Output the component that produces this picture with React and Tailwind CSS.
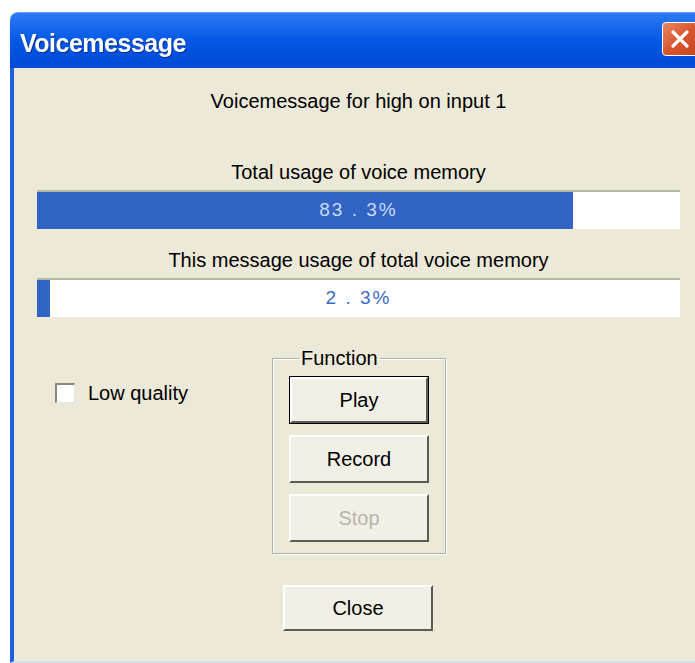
import React, { useState } from 'react';

const font = { fontFamily: '"Liberation Sans", Arial, sans-serif' };

// classic raised push button
function PushButton({ children, isDefault, disabled, className = '' }) {
  return (
    <button
      disabled={disabled}
      className={`relative flex items-center justify-center bg-[#f1efe6] text-[20px] ${isDefault ? 'border border-black' : ''} ${className}`}
    >
      <span className="absolute inset-0 border-t-2 border-l-2 border-t-white border-l-white border-b-2 border-r-2 border-b-[#5c5a52] border-r-[#5c5a52]" />
      <span className={disabled ? 'text-[#b8b5a8]' : 'text-black'}>{children}</span>
    </button>
  );
}

function UsageBar({ percent, label }) {
  return (
    <div className="relative h-[39px] bg-white border-t-2 border-t-[#b9b6aa]">
      <div className="absolute left-0 top-0 bottom-0 bg-[#3164c4]" style={{ width: `${percent}%` }} />
      <div className="absolute inset-0 flex items-center justify-center">
        <span
          className="text-[19px] tracking-[2px] whitespace-pre"
          style={{ color: percent > 50 ? '#c9dbf3' : '#3b6bc4' }}
        >
          {label}
        </span>
      </div>
    </div>
  );
}

export default function App() {
  const [lowQuality, setLowQuality] = useState(false);

  return (
    <div className="w-[695px] h-[663px] bg-white overflow-hidden pl-[10px] pt-[12px]" style={font}>
      <div className="flex flex-col h-full w-[690px]">
        {/* title bar */}
        <div className="h-[56px] rounded-tl-[8px] flex items-start justify-between bg-gradient-to-b from-[#2c7af5] via-[#0458e6] to-[#0149d6] border-t border-t-[#5fa0ff]">
          <span className="pl-[10px] pt-[12px] text-white font-bold text-[25px] tracking-[-0.5px] drop-shadow-[1px_1px_0_#0a2f8a]">
            Voicemessage
          </span>
          <div className="w-[38px] h-[34px] mt-[9px] rounded-[4px] border border-white bg-gradient-to-br from-[#e6865e] via-[#d8562f] to-[#c2441f] flex items-center justify-start pl-[6px]">
            <svg width="22" height="22" viewBox="0 0 22 22">
              <path d="M4 4 L18 18 M18 4 L4 18" stroke="white" strokeWidth="3.2" strokeLinecap="round" />
            </svg>
          </div>
        </div>

        {/* dialog body */}
        <div className="flex-1 bg-[#ece9d8] border-l-4 border-l-[#1e5fe0] border-b-2 border-b-[#d3e2f2] pl-[23px] pr-[20px] flex flex-col text-[20px] text-black">
          <div className="h-[64px] flex items-center justify-center pt-[2px]">Voicemessage for high on input 1</div>
          <div className="h-[58px] flex items-end justify-center pb-[3px]">Total usage of voice memory</div>
          <UsageBar percent={83.3} label="83 . 3%" />
          <div className="h-[49px] flex items-end justify-center pb-[3px]">This message usage of total voice memory</div>
          <UsageBar percent={2.0} label="2 . 3%" />

          <div className="flex mt-[31px]">
            <div className="w-[235px] shrink-0">
              <label className="flex items-center gap-[13px] ml-[18px] mt-[35px] h-[20px]">
                <span
                  onClick={() => setLowQuality(!lowQuality)}
                  className="w-[20px] h-[20px] bg-white border-t-2 border-l-2 border-t-[#8a877c] border-l-[#8a877c] border-b border-r border-b-[#e8e6dc] border-r-[#e8e6dc]"
                />
                <span>Low quality</span>
              </label>
            </div>

            {/* Function group */}
            <fieldset className="w-[173px] h-[206px] border border-[#b3b0a4] shadow-[inset_1px_1px_0_white,1px_1px_0_white] px-[16px] pt-[8px]">
              <legend className="ml-[10px] px-[2px] text-[20px] leading-[20px]">Function</legend>
              <div className="flex flex-col gap-[11px]">
                <PushButton isDefault className="w-[140px] h-[48px]">Play</PushButton>
                <PushButton className="w-[140px] h-[48px]">Record</PushButton>
                <PushButton disabled className="w-[140px] h-[48px]">Stop</PushButton>
              </div>
            </fieldset>
          </div>

          <div className="flex mt-[31px]">
            <PushButton className="ml-[246px] w-[150px] h-[46px]">Close</PushButton>
          </div>
        </div>
      </div>
    </div>
  );
}
